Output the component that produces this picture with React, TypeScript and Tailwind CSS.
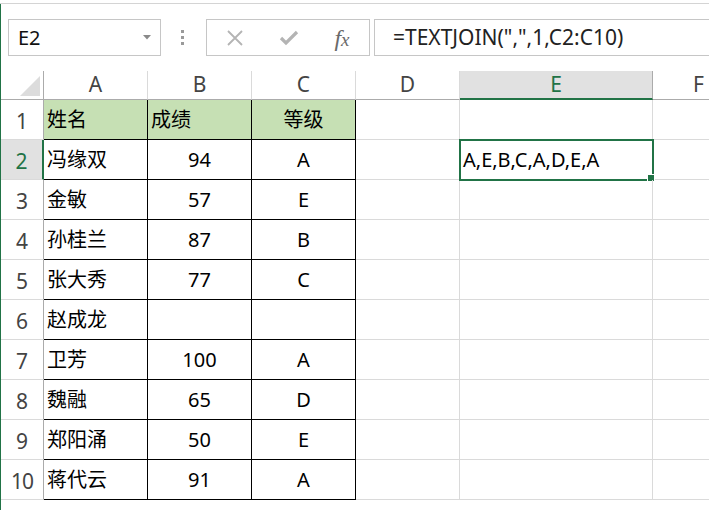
import React from "react";

const FONT = '"Noto Sans", "Noto Sans CJK SC", sans-serif';

type Row = { name: string; score: string; grade: string };

const rows: Row[] = [
  { name: "冯缘双", score: "94", grade: "A" },
  { name: "金敏", score: "57", grade: "E" },
  { name: "孙桂兰", score: "87", grade: "B" },
  { name: "张大秀", score: "77", grade: "C" },
  { name: "赵成龙", score: "", grade: "" },
  { name: "卫芳", score: "100", grade: "A" },
  { name: "魏融", score: "65", grade: "D" },
  { name: "郑阳涌", score: "50", grade: "E" },
  { name: "蒋代云", score: "91", grade: "A" },
];

function Toolbar() {
  return (
    <div className="flex items-center h-[52px] pt-[15px] pl-[7px] bg-white">
      {/* name box */}
      <div className="flex items-center justify-between w-[153px] h-[37px] border border-[#c6c6c6] pl-[9px] pr-[9px]">
        <span className="text-[20px] text-[#111] leading-none">E2</span>
        <svg width="8" height="5" viewBox="0 0 8 5">
          <path d="M0 0h8L4 4.5z" fill="#8a8a8a" />
        </svg>
      </div>
      <div className="flex flex-col gap-[3px] ml-[20px] mr-[22px]">
        <span className="w-[3px] h-[3px] bg-[#9a9a9a]" />
        <span className="w-[3px] h-[3px] bg-[#9a9a9a]" />
        <span className="w-[3px] h-[3px] bg-[#9a9a9a]" />
      </div>
      {/* cancel / enter / fx */}
      <div className="flex items-center w-[164px] h-[37px] border border-[#c6c6c6]">
        <div className="w-[56px] flex justify-center">
          <svg width="18" height="18" viewBox="0 0 18 18">
            <path d="M2 2l14 14M16 2L2 16" stroke="#b4b4b4" strokeWidth="1.8" />
          </svg>
        </div>
        <div className="w-[52px] flex justify-center">
          <svg width="20" height="16" viewBox="0 0 20 16">
            <path d="M2 8l5 5L18 2" stroke="#b4b4b4" strokeWidth="3.2" fill="none" />
          </svg>
        </div>
        <div className="w-[54px] flex justify-center">
          <span
            className="text-[24px] italic text-[#6a6a6a] leading-none"
            style={{ fontFamily: '"Liberation Serif", serif' }}
          >
            f<span className="text-[19px]">x</span>
          </span>
        </div>
      </div>
      <div className="flex items-center flex-1 h-[37px] ml-[4px] border border-[#c6c6c6] border-r-0 pl-[18px]">
        <span className="text-[21px] text-[#222] leading-none">=TEXTJOIN(",",1,C2:C10)</span>
      </div>
    </div>
  );
}

function ColHeader({ label, w, active }: { label: string; w: string; active?: boolean }) {
  return (
    <div
      className={`${w} h-[29px] flex items-center justify-center text-[21px] border-r border-b ${
        active
          ? "bg-[#e1e1e1] text-[#217346] border-r-[#ababab] border-b-2 border-b-[#217346]"
          : "bg-white text-[#444] border-r-[#dadada] border-b-[#ababab]"
      }`}
    >
      {label}
    </div>
  );
}

export default function App() {
  return (
    <div className="w-[709px] h-[510px] overflow-hidden bg-white" style={{ fontFamily: FONT }}>
      <div className="h-[3px] border-b border-[#d4d4d4] box-content" />
      <div className="border-l border-[#217346] h-[507px] overflow-hidden">
        <Toolbar />
        {/* sheet */}
        <div className="mt-[15px]">
          <div className="flex">
            <div className="w-[43px] h-[29px] border-r border-b border-[#ababab] bg-white flex items-end justify-end p-[3px]">
              <svg width="20" height="20" viewBox="0 0 20 20">
                <path d="M20 0V20H0z" fill="#dcdcdc" />
              </svg>
            </div>
            <ColHeader label="A" w="w-[104px]" />
            <ColHeader label="B" w="w-[104px]" />
            <ColHeader label="C" w="w-[104px]" />
            <ColHeader label="D" w="w-[104px]" />
            <ColHeader label="E" w="w-[193px]" active />
            <div className="flex-1 h-[29px] border-b border-[#ababab] text-[21px] text-[#444] pl-[40px] flex items-center">
              F
            </div>
          </div>

          {/* row 1 */}
          <div className="flex h-[40px] text-[20px] text-black">
            <div className="w-[43px] border-r border-b border-[#ababab] border-b-[#dadada] flex items-end justify-center pb-[2px] text-[21px] text-[#444]">
              1
            </div>
            <div className="w-[104px] bg-[#c6e0b4] border-r border-b border-black flex items-center pl-[3px] pt-[1px]">姓名</div>
            <div className="w-[104px] bg-[#c6e0b4] border-r border-b border-black flex items-center pl-[3px] pt-[1px]">成绩</div>
            <div className="w-[104px] bg-[#c6e0b4] border-r border-b border-black flex items-center justify-center pt-[1px]">等级</div>
            <div className="w-[104px] border-r border-b border-[#dadada]" />
            <div className="w-[193px] border-r border-b border-[#dadada]" />
            <div className="flex-1 border-b border-[#dadada]" />
          </div>

          {rows.map((r, i) => {
            const n = i + 2;
            const sel = n === 2;
            return (
              <div key={n} className="flex h-[40px] text-[20px] text-black">
                <div
                  className={`w-[43px] border-b border-[#dadada] flex items-end justify-center pb-[2px] text-[21px] ${
                    sel
                      ? "bg-[#e1e1e1] text-[#217346] border-r-2 border-r-[#217346]"
                      : "text-[#444] border-r border-r-[#ababab]"
                  } ${n === 10 ? "tracking-[-1px]" : ""}`}
                >
                  {n}
                </div>
                <div className="w-[104px] border-r border-b border-black flex items-center pl-[3px] pt-[1px]">{r.name}</div>
                <div className="w-[104px] border-r border-b border-black flex items-center justify-center pt-[1px]">{r.score}</div>
                <div className="w-[104px] border-r border-b border-black flex items-center justify-center pt-[1px]">{r.grade}</div>
                <div className="w-[104px] border-r border-b border-[#dadada]" />
                <div className="relative w-[193px] border-r border-b border-[#dadada] flex items-center pl-[3px] pt-[1px]">
                  {sel && (
                    <>
                      A,E,B,C,A,D,E,A
                      <div className="absolute -left-[1px] -top-[1px] w-[195px] h-[42px] border-2 border-[#217346]" />
                      <div className="absolute -right-[3px] -bottom-[3px] w-[6px] h-[6px] bg-[#217346] border border-white box-content" />
                    </>
                  )}
                </div>
                <div className="flex-1 border-b border-[#dadada]" />
              </div>
            );
          })}
        </div>
      </div>
    </div>
  );
}
